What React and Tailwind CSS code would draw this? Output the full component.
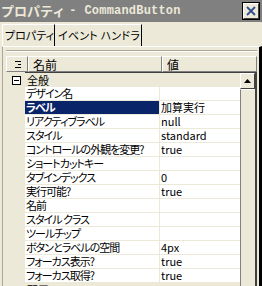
import React from 'react';

const rows = [
  { n: 'デザイン名', v: '' },
  { n: 'ラベル', v: '加算実行', sel: true },
  { n: 'リアクティブラベル', v: 'null' },
  { n: 'スタイル', v: 'standard' },
  { n: 'コントロールの外観を変更?', v: 'true' },
  { n: 'ショートカットキー', v: '' },
  { n: 'タブインデックス', v: '0' },
  { n: '実行可能?', v: 'true' },
  { n: '名前', v: '' },
  { n: 'スタイル クラス', v: '' },
  { n: 'ツールチップ', v: '' },
  { n: 'ボタンとラベルの空間', v: '4px' },
  { n: 'フォーカス表示?', v: 'true' },
  { n: 'フォーカス取得?', v: 'true' },
];

function Expander() {
  return (
    <div className="w-[9px] h-[9px] border border-[#000000] bg-white flex items-center justify-center">
      <div className="w-[5px] h-px bg-black" />
    </div>
  );
}

function Category({ label }) {
  return (
    <div className="h-[14px] shrink-0 flex items-center bg-[#ece9d8]">
      <div className="w-[22px] h-full flex items-center pl-[9px]">
        <Expander />
      </div>
      <div className="pl-[2px] text-black whitespace-nowrap leading-[14px]">{label}</div>
    </div>
  );
}

function Row({ n, v, sel }) {
  return (
    <div className="h-[14px] shrink-0 flex">
      <div className="w-[22px] h-full bg-[#ece9d8]" />
      <div className="w-[135px] h-full flex border-b border-r border-[#ece9d8] bg-white overflow-hidden">
        <div
          className={
            'flex-1 h-full flex items-center pl-[1px] whitespace-nowrap leading-[13px] tracking-[-1px] overflow-hidden ' +
            (sel ? 'bg-[#0a246a] text-white font-bold' : 'text-black')
          }
        >
          {n}
        </div>
      </div>
      <div className="flex-1 h-full flex items-center border-b border-[#ece9d8] bg-white pl-[1px] whitespace-nowrap leading-[13px] overflow-hidden text-black">
        {v}
      </div>
    </div>
  );
}

export default function App() {
  return (
    <div className="w-[262px] h-[286px] bg-[#ece9d8] overflow-hidden flex flex-col [font-family:'Noto_Sans_CJK_JP',sans-serif] [font-feature-settings:'palt'] text-[11px]">
      {/* title bar */}
      <div className="h-[22px] bg-[#808080] flex items-center pl-[1px] pr-[3px] shrink-0">
        <div className="flex-1 flex items-center text-[#ece9d8] font-bold whitespace-nowrap leading-[14px]">
          <span className="text-[13px] [font-feature-settings:normal]">プロパティ</span>
          <span className="ml-[4px] [font-family:'Liberation_Mono',monospace] text-[12px]">-</span>
          <span className="ml-[8px] [font-family:'Liberation_Mono',monospace] text-[12px] tracking-[0.2px]">CommandButton</span>
        </div>
        <div className="w-[16px] h-[16px] bg-[#ece9d8] border border-t-white border-l-white border-r-[#404040] border-b-[#404040] outline outline-1 outline-[#000000] flex items-center justify-center">
          <svg width="10" height="10" viewBox="0 0 10 10">
            <path d="M1 1 L9 9 M9 1 L1 9" stroke="#2f4f8f" strokeWidth="1.8" />
          </svg>
        </div>
      </div>

      {/* tabs */}
      <div className="h-[24px] flex items-end pl-[2px] shrink-0">
        <div className="h-[22px] w-[53px] border-t border-l border-white border-r border-r-black flex items-center pl-[2px] whitespace-nowrap leading-[13px] text-black">
          プロパティ
        </div>
        <div className="h-[22px] w-[87px] border-t border-white border-r border-r-black flex items-center pl-[3px] whitespace-nowrap leading-[13px] tracking-[0.2px] text-black">
          イベント ハンドラ
        </div>
      </div>

      {/* panel */}
      <div className="flex-1 ml-[2px] border-l border-[#aca899] border-t border-t-white border-r-[3px] border-r-black flex flex-col pt-[3px] min-h-0">
        <div className="ml-[3px] mr-[2px] h-px bg-[#aca899] shrink-0" />
        <div className="ml-[3px] mr-[2px] h-px bg-white shrink-0" />
        <div className="h-[4px] shrink-0" />
        {/* header */}
        <div className="ml-[3px] mr-[2px] h-[16px] flex shrink-0">
          <div className="w-[22px] h-full border border-t-white border-l-white border-r-[#808080] border-b-[#808080] flex items-center justify-center">
            <svg width="10" height="9" viewBox="0 0 10 9">
              <path d="M3 1.5 H9 M6 4.5 H9 M3 7.5 H9" stroke="#000" strokeWidth="1" />
            </svg>
          </div>
          <div className="w-[134px] h-full border border-t-white border-l-white border-r-[#808080] border-b-[#808080] flex items-center pl-[4px] leading-[13px] text-black text-[12px]">
            名前
          </div>
          <div className="flex-1 h-full border border-t-white border-l-white border-r-[#808080] border-b-[#808080] flex items-center pl-[4px] leading-[13px] text-black text-[12px]">
            値
          </div>
        </div>
        {/* list */}
        <div className="flex-1 flex min-h-0 mr-[2px] overflow-hidden">
          <div className="flex-1 flex flex-col min-w-0">
            <div className="h-px ml-[22px] bg-[#404040] shrink-0" />
            <Category label="全般" />
            {rows.map((r) => (
              <Row key={r.n} {...r} />
            ))}
            <Category label="配置" />
          </div>
          <div className="w-[15px] flex flex-col border-t border-[#404040]">
            <div className="h-[16px] shrink-0 bg-[#ece9d8] border border-t-white border-l-white border-r-[#404040] border-b-[#404040] flex items-center justify-center">
              <svg width="7" height="4" viewBox="0 0 7 4">
                <path d="M3.5 0 L7 4 L0 4 Z" fill="#000" />
              </svg>
            </div>
            <div className="flex-1 bg-[#ece9d8] border-l border-l-[#808080] border-t border-t-white" />
          </div>
          <div className="w-[2px] bg-[#404040]" />
        </div>
      </div>
    </div>
  );
}
